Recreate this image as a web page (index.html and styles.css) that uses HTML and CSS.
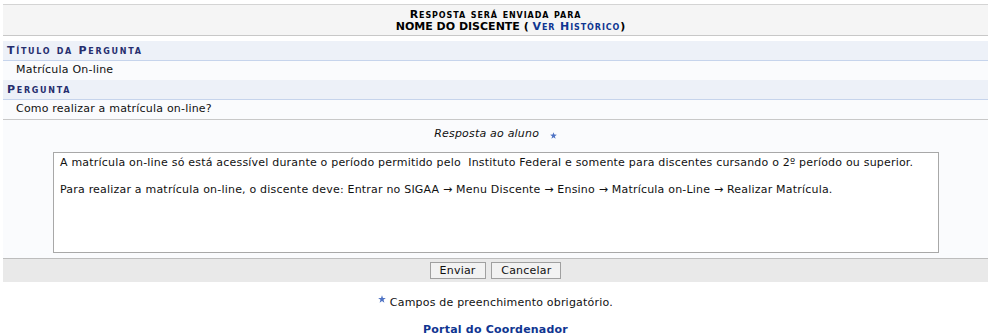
FILE: index.html
```html
<!DOCTYPE html>
<html lang="pt-BR">
<head>
  <meta charset="UTF-8" />
  <title>Responder Pergunta</title>
  <link rel="stylesheet" href="styles.css">
</head>
<body>

  <div class="formulario">
    <div class="caption">
      <div class="cap-line sc">Resposta será enviada para</div>
      <div class="cap-line nome">NOME DO DISCENTE ( <a href="#" class="sc link">Ver Histórico</a>)</div>
    </div>

    <div class="sub">Título da Pergunta</div>
    <div class="row">Matrícula On-line</div>
    <div class="sub">Pergunta</div>
    <div class="row last">Como realizar a matrícula on-line?</div>

    <div class="campo">
      <div class="label"><em>Resposta ao aluno</em>
        <svg class="star" width="7" height="7" viewBox="0 0 10 10"><path d="M5 0.3 L6.2 3.7 L9.8 3.8 L6.9 6 L8 9.6 L5 7.5 L2 9.6 L3.1 6 L0.2 3.8 L3.8 3.7 Z" fill="#4f73c4"/></svg>
      </div>
      <textarea class="resposta">A matrícula on-line só está acessível durante o período permitido pelo  Instituto Federal e somente para discentes cursando o 2º período ou superior.

Para realizar a matrícula on-line, o discente deve: Entrar no SIGAA → Menu Discente → Ensino → Matrícula on-Line → Realizar Matrícula.</textarea>
    </div>

    <div class="botoes">
      <button>Enviar</button>
      <button>Cancelar</button>
    </div>
  </div>

  <p class="obrigatorio">
    <svg class="star" width="8" height="8" viewBox="0 0 10 10"><path d="M5 0.3 L6.2 3.7 L9.8 3.8 L6.9 6 L8 9.6 L5 7.5 L2 9.6 L3.1 6 L0.2 3.8 L3.8 3.7 Z" fill="#4f73c4"/></svg>
    Campos de preenchimento obrigatório.
  </p>

  <div class="portal"><a href="#">Portal do Coordenador</a></div>

</body>
</html>
```

FILE: styles.css
```css
body {
  margin: 0;
  padding: 4px 6px 0 3px;
  font-family: "DejaVu Sans", Verdana, sans-serif;
  font-size: 11px;
  letter-spacing: 0.2px;
  color: #111;
  background: #fff;
}
.formulario {
  width: 985px;
}
.caption {
  background: #f5f5f5;
  border-top: 1px solid #d4d4d4;
  border-bottom: 1px solid #c8c8c8;
  text-align: center;
  font-weight: bold;
  color: #000;
  padding: 4px 0 2px;
  margin-bottom: 5px;
  line-height: 12px;
  letter-spacing: 0;
}
.cap-line.nome {
  padding-left: 30px;
}
.sc {
  font-variant: small-caps;
  letter-spacing: 0.9px;
}
.link {
  color: #0f3591;
  text-decoration: none;
}
.sub {
  background: #edf1f8;
  border-bottom: 1px solid #c6d4ec;
  color: #262e6e;
  font-weight: bold;
  font-variant: small-caps;
  letter-spacing: 1.7px;
  padding: 3px 4px 2px;
  line-height: 14px;
}
.row {
  background: #fafbfd;
  padding: 2px 13px 3px;
  line-height: 14px;
}
.row.last {
  border-bottom: 1px solid #c8c8c8;
}
.campo {
  background: #fafbfd;
  padding: 7px 0 5px 50px;
}
.label {
  text-align: center;
  padding-right: 50px;
  line-height: 14px;
  margin-bottom: 11px;
}
.label .star {
  vertical-align: -2px;
  margin-left: 7px;
}
.resposta {
  display: block;
  width: 886px;
  height: 101px;
  box-sizing: border-box;
  border: 1px solid #a8a8a8;
  background: #fff;
  font-family: "DejaVu Sans", Verdana, sans-serif;
  font-size: 11px;
  letter-spacing: 0.2px;
  line-height: 13.5px;
  color: #111;
  padding: 3px 6px;
  resize: none;
  overflow: hidden;
}
.botoes {
  background: #e9e9e9;
  border-top: 1px solid #bdbdbd;
  text-align: center;
  padding: 3px 0 3px;
}
.botoes button {
  font-family: "DejaVu Sans", Verdana, sans-serif;
  font-size: 11px;
  letter-spacing: 0.2px;
  color: #111;
  background: #f2f2f2;
  border: 1px solid #a0a0a0;
  padding: 1px 9px;
  margin: 0 1px;
}
.obrigatorio {
  text-align: center;
  margin: 13px 0 0;
  line-height: 14px;
}
.obrigatorio .star {
  margin: 0;
  vertical-align: 3px;
}
.portal {
  text-align: center;
  margin-top: 13px;
  font-weight: bold;
}
.portal a {
  color: #0f3591;
  text-decoration: none;
}
```
